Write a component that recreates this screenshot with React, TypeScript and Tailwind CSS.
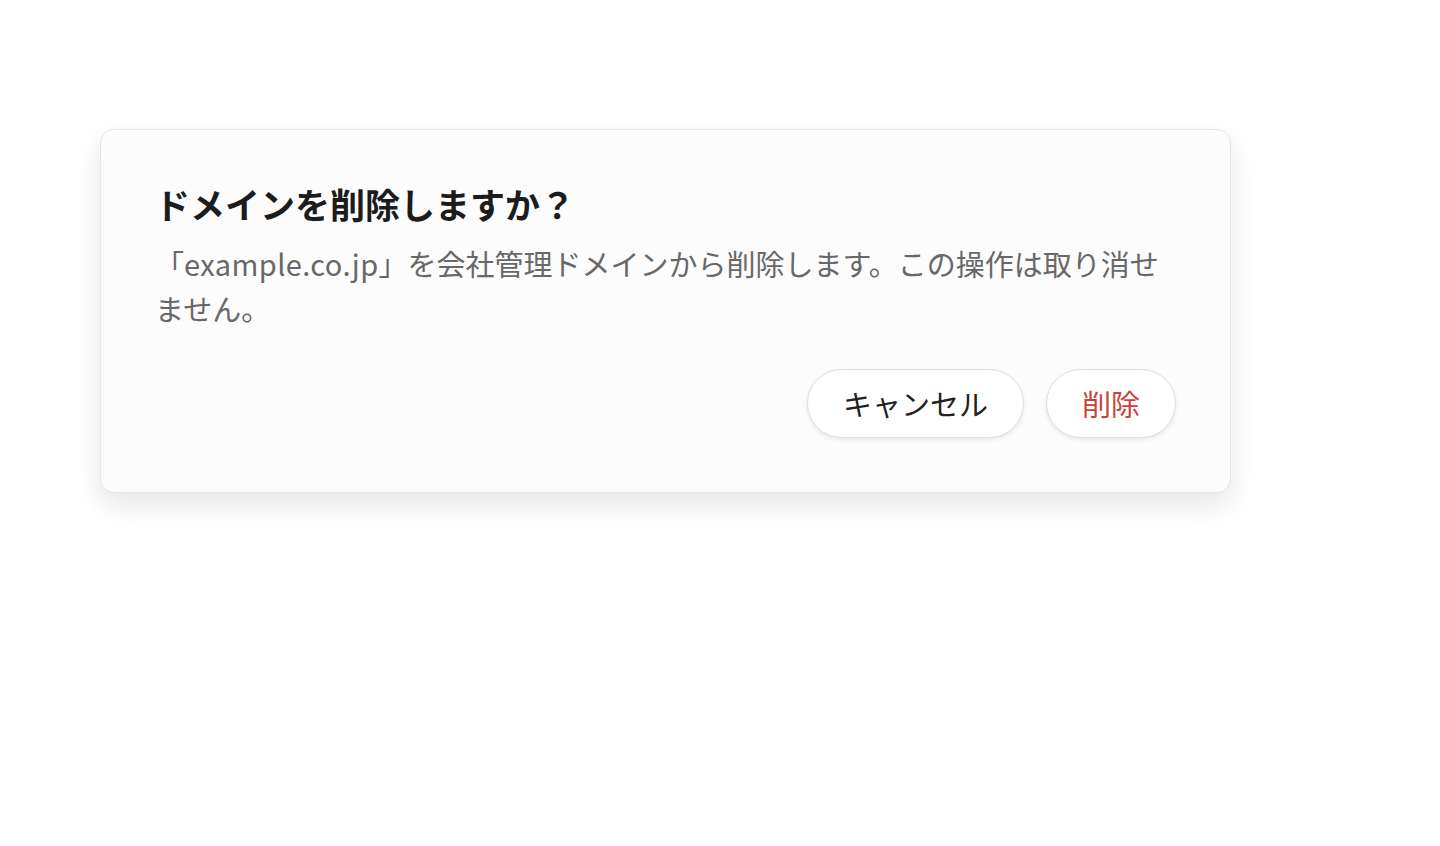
export default function App() {
  return (
    <div
      className="min-h-[846px] w-full bg-white pt-[129px] pl-[100px] [text-spacing-trim:space-all]"
      style={{ fontFamily: '"Noto Sans CJK JP", "Noto Sans", sans-serif' }}
    >
      <div className="w-[1131px] rounded-[14px] border border-[#e6e6e6] bg-[#fcfcfc] px-[54px] pt-[51px] pb-[54px] shadow-[0_12px_28px_rgba(0,0,0,0.10)]">
        <h2 className="text-[35px] leading-[46px] font-bold text-[#1c1c1c]">
          ドメインを削除しますか？
        </h2>
        <p className="mt-[14px] text-[29px] leading-[45px] text-[#686868] [text-spacing-trim:space-all]">
          「<span className="tracking-[0.4px]">example.co.jp</span>」を会社管理ドメインから削除します。この操作は取り消せません。
        </p>
        <div className="mt-[38px] flex justify-end gap-[22px]">
          <button className="h-[69px] rounded-full border border-[#dedede] bg-white px-[35px] text-[29px] text-[#222222] shadow-[0_2px_4px_rgba(0,0,0,0.08)]">
            キャンセル
          </button>
          <button className="h-[69px] rounded-full border border-[#dedede] bg-white px-[35px] text-[29px] text-[#c8423c] shadow-[0_2px_4px_rgba(0,0,0,0.08)]">
            削除
          </button>
        </div>
      </div>
    </div>
  );
}
